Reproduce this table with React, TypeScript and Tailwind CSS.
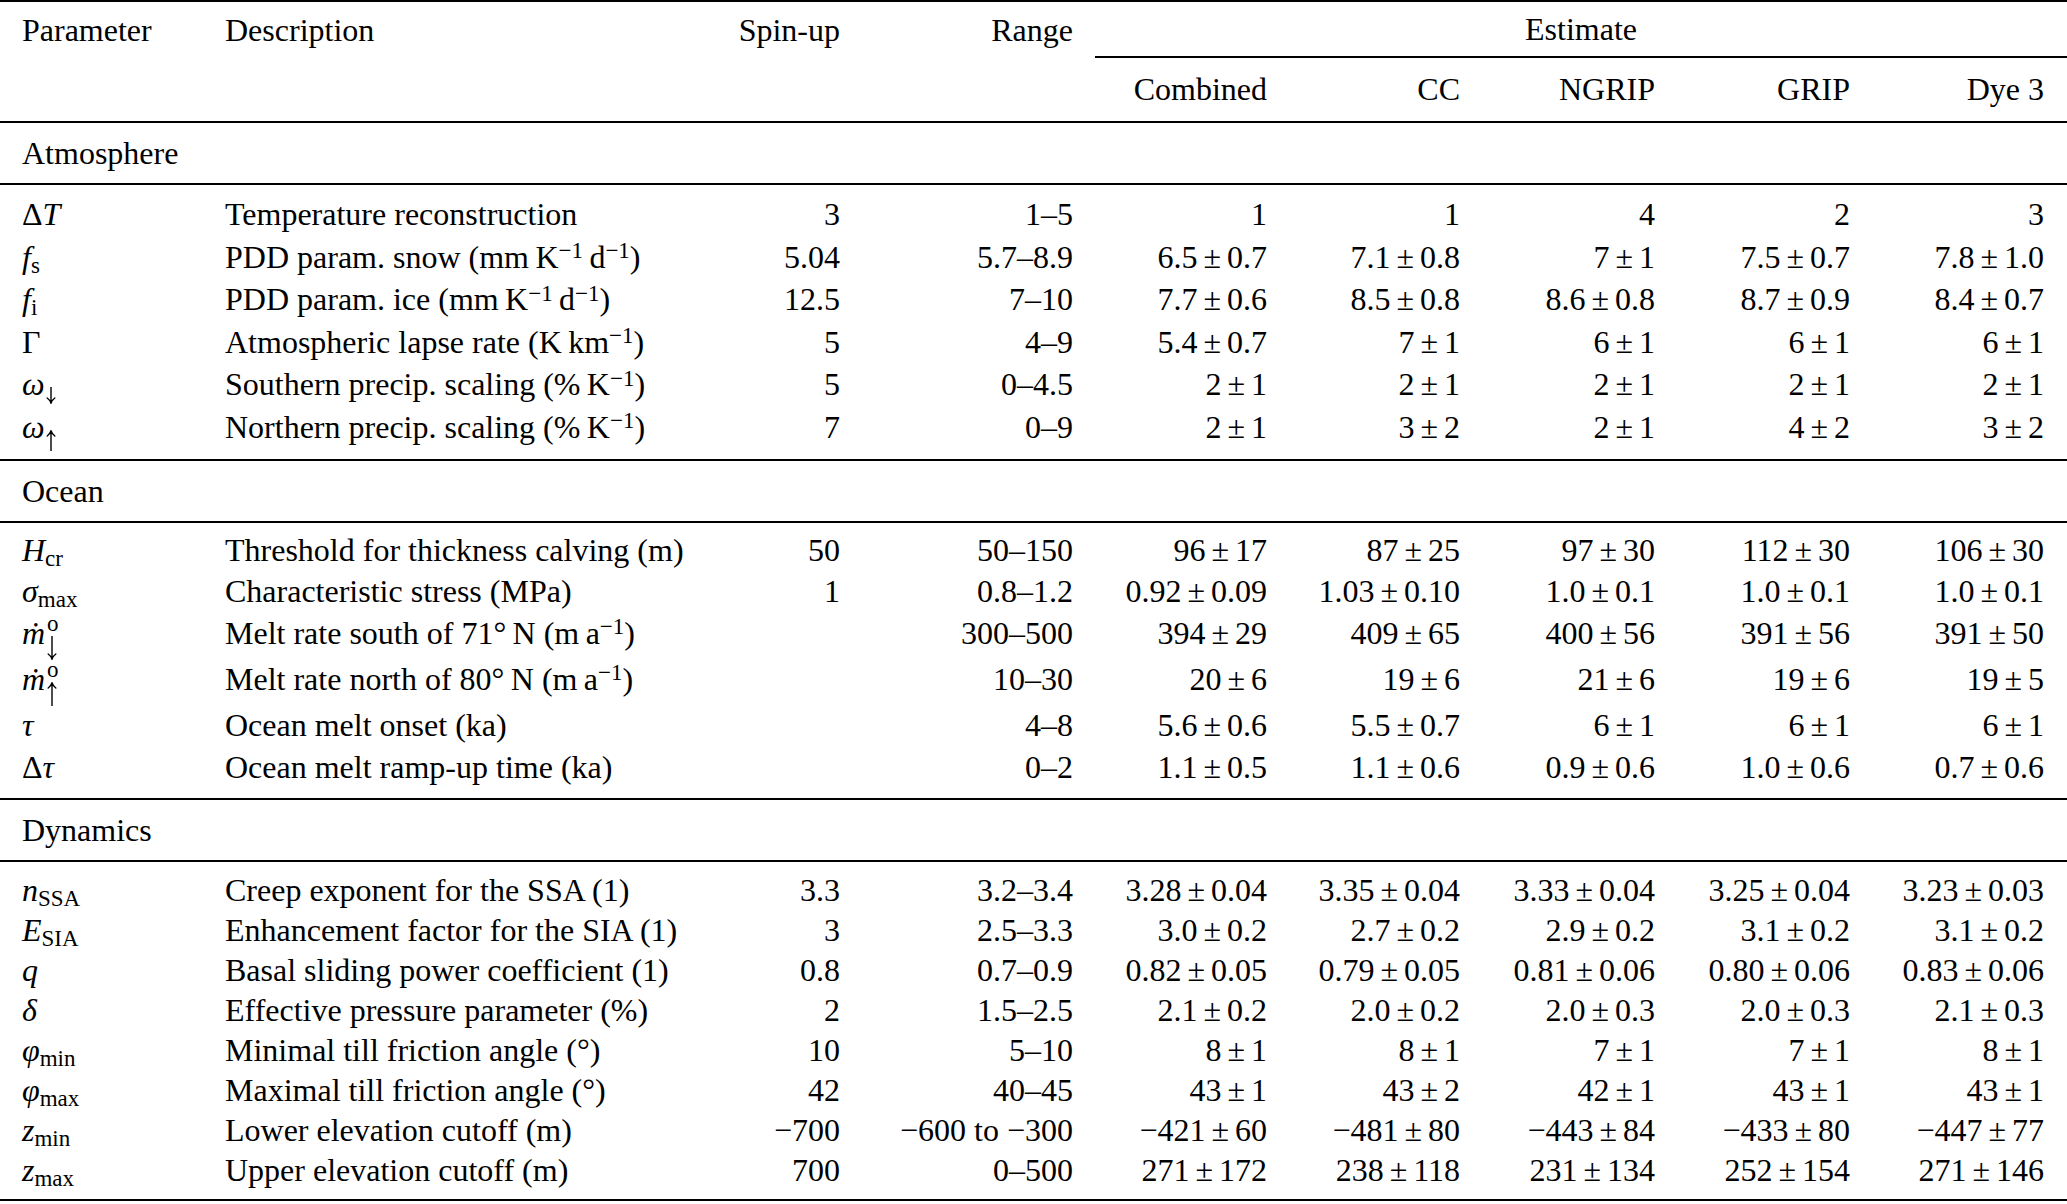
import React from "react";

const COLS =
  "grid grid-cols-[203px_475px_140px_233px_194px_193px_195px_195px_194px] items-center whitespace-nowrap";

const Sup = ({ children }: { children: React.ReactNode }) => (
  <sup className="text-[23px] top-[-0.42em]">{children}</sup>
);
const Sub = ({ children }: { children: React.ReactNode }) => (
  <sub className="text-[23px] not-italic bottom-[-0.22em]">{children}</sub>
);

function ArrowSvg({ dir, h, className }: { dir: "up" | "down"; h: number; className: string }) {
  const w = 10;
  const y2 = h - 0.8;
  const d =
    dir === "down"
      ? `M5 0 L5 ${y2} M1.2 ${h - 6} Q4 ${h - 4} 5 ${y2} Q6 ${h - 4} 8.8 ${h - 6}`
      : `M5 ${h} L5 0.8 M1.2 6 Q4 4 5 0.8 Q6 4 8.8 6`;
  return (
    <svg
      width={w}
      height={h}
      viewBox={`0 0 ${w} ${h}`}
      className={className}
      fill="none"
      stroke="black"
      strokeWidth={1.4}
      strokeLinecap="round"
      strokeLinejoin="round"
    >
      <path d={d} />
    </svg>
  );
}

const Arrow = ({ dir }: { dir: "up" | "down" }) => (
  <span className="relative inline-block w-[12px]">
    {dir === "down" ? (
      <ArrowSvg dir="down" h={17} className="absolute left-[1px] top-[-8px]" />
    ) : (
      <ArrowSvg dir="up" h={21} className="absolute left-[1px] top-[-8px]" />
    )}
  </span>
);

const I = ({ children }: { children: React.ReactNode }) => <span className="italic">{children}</span>;

const Stack = ({ dir }: { dir: "up" | "down" }) => (
  <span className="relative inline-block w-[16px]">
    <span className="absolute left-[2px] top-[-32px] text-[23px] leading-none not-italic">o</span>
    <ArrowSvg dir={dir} h={24} className="absolute left-[2px] top-[-8px]" />
  </span>
);

const inv = "\u2212";
const ts = "\u2009";

function PM({ v }: { v: string }) {
  if (!v.includes("±")) return <>{v}</>;
  const [a, b] = v.split("±");
  return (
    <>
      {a}
      <span className="mx-[6px]">±</span>
      {b}
    </>
  );
}

type Row = {
  sym: React.ReactNode;
  desc: React.ReactNode;
  spin: string;
  range: string;
  est: string[];
  h: string;
};

const atmosphere: Row[] = [
  {
    sym: (
      <>
        Δ<I>T</I>
      </>
    ),
    desc: "Temperature reconstruction",
    spin: "3",
    range: "1–5",
    est: ["1", "1", "4", "2", "3"],
    h: "h-[42.5px]",
  },
  {
    sym: (
      <>
        <I>f</I>
        <Sub>s</Sub>
      </>
    ),
    desc: (
      <>
        PDD param. snow (mm{ts}K<Sup>{inv}1</Sup>
        {ts}d<Sup>{inv}1</Sup>)
      </>
    ),
    spin: "5.04",
    range: "5.7–8.9",
    est: ["6.5±0.7", "7.1±0.8", "7±1", "7.5±0.7", "7.8±1.0"],
    h: "h-[42.5px]",
  },
  {
    sym: (
      <>
        <I>f</I>
        <Sub>i</Sub>
      </>
    ),
    desc: (
      <>
        PDD param. ice (mm{ts}K<Sup>{inv}1</Sup>
        {ts}d<Sup>{inv}1</Sup>)
      </>
    ),
    spin: "12.5",
    range: "7–10",
    est: ["7.7±0.6", "8.5±0.8", "8.6±0.8", "8.7±0.9", "8.4±0.7"],
    h: "h-[42.5px]",
  },
  {
    sym: <>Γ</>,
    desc: (
      <>
        Atmospheric lapse rate (K{ts}km<Sup>{inv}1</Sup>)
      </>
    ),
    spin: "5",
    range: "4–9",
    est: ["5.4±0.7", "7±1", "6±1", "6±1", "6±1"],
    h: "h-[42.5px]",
  },
  {
    sym: (
      <>
        <I>ω</I>
        <Arrow dir="down" />
      </>
    ),
    desc: (
      <>
        Southern precip. scaling (%{ts}K<Sup>{inv}1</Sup>)
      </>
    ),
    spin: "5",
    range: "0–4.5",
    est: ["2±1", "2±1", "2±1", "2±1", "2±1"],
    h: "h-[42.5px]",
  },
  {
    sym: (
      <>
        <I>ω</I>
        <Arrow dir="up" />
      </>
    ),
    desc: (
      <>
        Northern precip. scaling (%{ts}K<Sup>{inv}1</Sup>)
      </>
    ),
    spin: "7",
    range: "0–9",
    est: ["2±1", "3±2", "2±1", "4±2", "3±2"],
    h: "h-[42.5px]",
  },
];

const ocean: Row[] = [
  {
    sym: (
      <>
        <I>H</I>
        <Sub>cr</Sub>
      </>
    ),
    desc: "Threshold for thickness calving (m)",
    spin: "50",
    range: "50–150",
    est: ["96±17", "87±25", "97±30", "112±30", "106±30"],
    h: "h-[40px]",
  },
  {
    sym: (
      <>
        <I>σ</I>
        <Sub>max</Sub>
      </>
    ),
    desc: "Characteristic stress (MPa)",
    spin: "1",
    range: "0.8–1.2",
    est: ["0.92±0.09", "1.03±0.10", "1.0±0.1", "1.0±0.1", "1.0±0.1"],
    h: "h-[41px]",
  },
  {
    sym: (
      <>
        <I>ṁ</I>
        <Stack dir="down" />
      </>
    ),
    desc: (
      <>
        Melt rate south of 71°{ts}N (m{ts}a<Sup>{inv}1</Sup>)
      </>
    ),
    spin: "",
    range: "300–500",
    est: ["394±29", "409±65", "400±56", "391±56", "391±50"],
    h: "h-[44px]",
  },
  {
    sym: (
      <>
        <I>ṁ</I>
        <Stack dir="up" />
      </>
    ),
    desc: (
      <>
        Melt rate north of 80°{ts}N (m{ts}a<Sup>{inv}1</Sup>)
      </>
    ),
    spin: "",
    range: "10–30",
    est: ["20±6", "19±6", "21±6", "19±6", "19±5"],
    h: "h-[48px]",
  },
  {
    sym: <I>τ</I>,
    desc: "Ocean melt onset (ka)",
    spin: "",
    range: "4–8",
    est: ["5.6±0.6", "5.5±0.7", "6±1", "6±1", "6±1"],
    h: "h-[44px]",
  },
  {
    sym: (
      <>
        Δ<I>τ</I>
      </>
    ),
    desc: "Ocean melt ramp-up time (ka)",
    spin: "",
    range: "0–2",
    est: ["1.1±0.5", "1.1±0.6", "0.9±0.6", "1.0±0.6", "0.7±0.6"],
    h: "h-[40px]",
  },
];

const dynamics: Row[] = [
  {
    sym: (
      <>
        <I>n</I>
        <Sub>SSA</Sub>
      </>
    ),
    desc: "Creep exponent for the SSA (1)",
    spin: "3.3",
    range: "3.2–3.4",
    est: ["3.28±0.04", "3.35±0.04", "3.33±0.04", "3.25±0.04", "3.23±0.03"],
    h: "h-[40px]",
  },
  {
    sym: (
      <>
        <I>E</I>
        <Sub>SIA</Sub>
      </>
    ),
    desc: "Enhancement factor for the SIA (1)",
    spin: "3",
    range: "2.5–3.3",
    est: ["3.0±0.2", "2.7±0.2", "2.9±0.2", "3.1±0.2", "3.1±0.2"],
    h: "h-[40px]",
  },
  {
    sym: <I>q</I>,
    desc: "Basal sliding power coefficient (1)",
    spin: "0.8",
    range: "0.7–0.9",
    est: ["0.82±0.05", "0.79±0.05", "0.81±0.06", "0.80±0.06", "0.83±0.06"],
    h: "h-[40px]",
  },
  {
    sym: <I>δ</I>,
    desc: "Effective pressure parameter (%)",
    spin: "2",
    range: "1.5–2.5",
    est: ["2.1±0.2", "2.0±0.2", "2.0±0.3", "2.0±0.3", "2.1±0.3"],
    h: "h-[40px]",
  },
  {
    sym: (
      <>
        <I>φ</I>
        <Sub>min</Sub>
      </>
    ),
    desc: "Minimal till friction angle (°)",
    spin: "10",
    range: "5–10",
    est: ["8±1", "8±1", "7±1", "7±1", "8±1"],
    h: "h-[40px]",
  },
  {
    sym: (
      <>
        <I>φ</I>
        <Sub>max</Sub>
      </>
    ),
    desc: "Maximal till friction angle (°)",
    spin: "42",
    range: "40–45",
    est: ["43±1", "43±2", "42±1", "43±1", "43±1"],
    h: "h-[40px]",
  },
  {
    sym: (
      <>
        <I>z</I>
        <Sub>min</Sub>
      </>
    ),
    desc: "Lower elevation cutoff (m)",
    spin: `${inv}700`,
    range: `${inv}600 to ${inv}300`,
    est: [`${inv}421±60`, `${inv}481±80`, `${inv}443±84`, `${inv}433±80`, `${inv}447±77`],
    h: "h-[40px]",
  },
  {
    sym: (
      <>
        <I>z</I>
        <Sub>max</Sub>
      </>
    ),
    desc: "Upper elevation cutoff (m)",
    spin: "700",
    range: "0–500",
    est: ["271±172", "238±118", "231±134", "252±154", "271±146"],
    h: "h-[40px]",
  },
];

const Rule = () => <div className="h-[2px] bg-black" />;

function DataRow({ r }: { r: Row }) {
  return (
    <div className={`${COLS} ${r.h}`}>
      <div>{r.sym}</div>
      <div>{r.desc}</div>
      <div className="text-right">{r.spin}</div>
      <div className="text-right">{r.range}</div>
      {r.est.map((e, i) => (
        <div key={i} className="text-right">
          <PM v={e} />
        </div>
      ))}
    </div>
  );
}

function Section({ title, rows, pad }: { title: string; rows: Row[]; pad: string }) {
  return (
    <>
      <div className="flex h-[60px] items-center pl-[22px]">{title}</div>
      <Rule />
      <div className={`pl-[22px] ${pad}`}>
        {rows.map((r, i) => (
          <DataRow key={i} r={r} />
        ))}
      </div>
      <Rule />
    </>
  );
}

export default function App() {
  return (
    <div className="w-[2067px] h-[1204px] overflow-hidden bg-white text-black font-['Liberation_Serif',serif] text-[32px] leading-[40px]">
      <Rule />
      <div className="flex h-[55.5px]">
        <div className="w-[1095px] pl-[22px] grid grid-cols-[203px_475px_140px_233px] items-center whitespace-nowrap">
          <div>Parameter</div>
          <div>Description</div>
          <div className="text-right">Spin-up</div>
          <div className="text-right">Range</div>
        </div>
        <div className="flex flex-1 flex-col">
          <div className="flex flex-1 items-center justify-center">Estimate</div>
          <div className="h-[1.5px] bg-black" />
        </div>
      </div>
      <div className={`${COLS} h-[63.5px] pl-[22px]`}>
        <div />
        <div />
        <div />
        <div />
        <div className="text-right">Combined</div>
        <div className="text-right">CC</div>
        <div className="text-right">NGRIP</div>
        <div className="text-right">GRIP</div>
        <div className="text-right">Dye 3</div>
      </div>
      <Rule />
      <Section title="Atmosphere" rows={atmosphere} pad="pt-[8px] pb-[11px]" />
      <Section title="Ocean" rows={ocean} pad="pt-[7px] pb-[11px]" />
      <Section title="Dynamics" rows={dynamics} pad="pt-[8px] pb-[9px]" />
    </div>
  );
}
